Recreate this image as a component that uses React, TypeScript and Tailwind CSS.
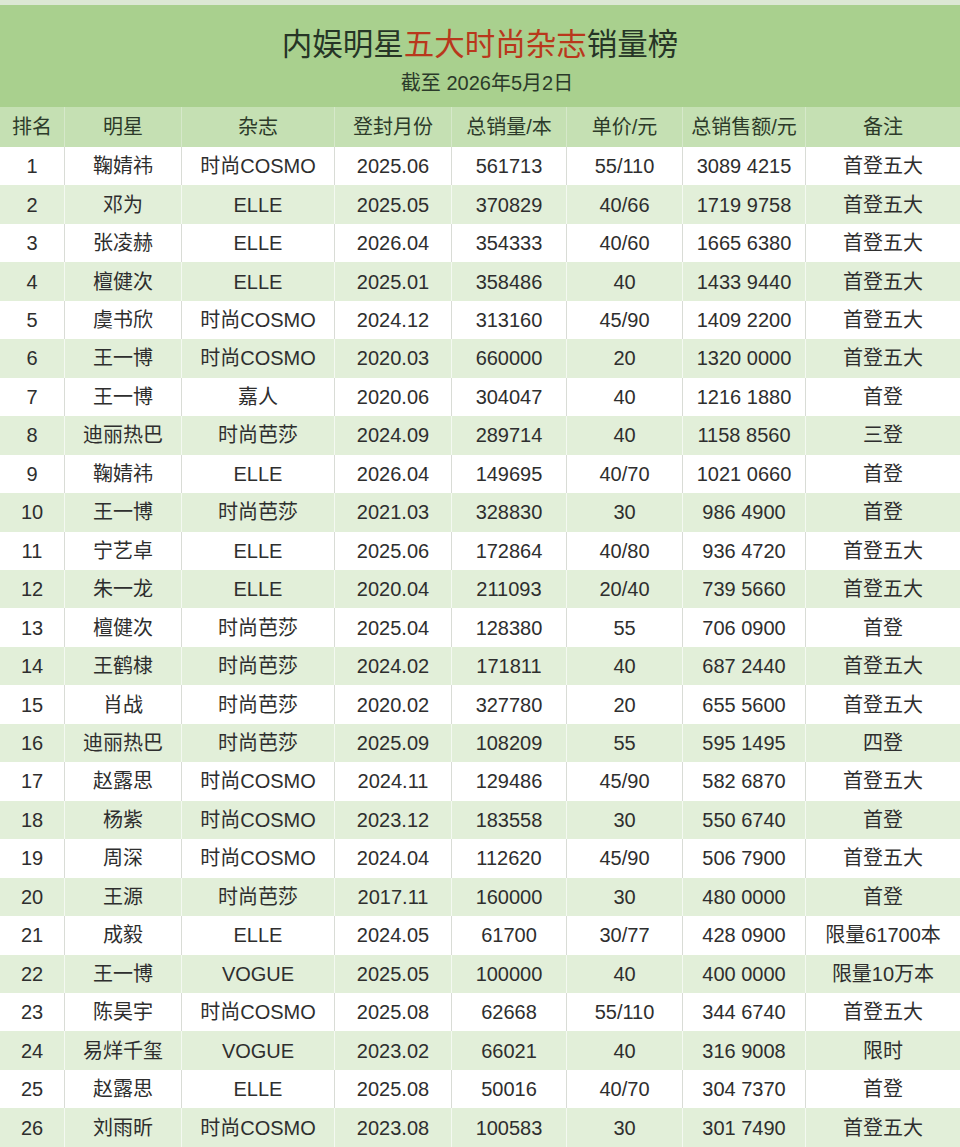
const rows: string[][] = [
  ["1", "鞠婧祎", "时尚COSMO", "2025.06", "561713", "55/110", "3089 4215", "首登五大"],
  ["2", "邓为", "ELLE", "2025.05", "370829", "40/66", "1719 9758", "首登五大"],
  ["3", "张凌赫", "ELLE", "2026.04", "354333", "40/60", "1665 6380", "首登五大"],
  ["4", "檀健次", "ELLE", "2025.01", "358486", "40", "1433 9440", "首登五大"],
  ["5", "虞书欣", "时尚COSMO", "2024.12", "313160", "45/90", "1409 2200", "首登五大"],
  ["6", "王一博", "时尚COSMO", "2020.03", "660000", "20", "1320 0000", "首登五大"],
  ["7", "王一博", "嘉人", "2020.06", "304047", "40", "1216 1880", "首登"],
  ["8", "迪丽热巴", "时尚芭莎", "2024.09", "289714", "40", "1158 8560", "三登"],
  ["9", "鞠婧祎", "ELLE", "2026.04", "149695", "40/70", "1021 0660", "首登"],
  ["10", "王一博", "时尚芭莎", "2021.03", "328830", "30", "986 4900", "首登"],
  ["11", "宁艺卓", "ELLE", "2025.06", "172864", "40/80", "936 4720", "首登五大"],
  ["12", "朱一龙", "ELLE", "2020.04", "211093", "20/40", "739 5660", "首登五大"],
  ["13", "檀健次", "时尚芭莎", "2025.04", "128380", "55", "706 0900", "首登"],
  ["14", "王鹤棣", "时尚芭莎", "2024.02", "171811", "40", "687 2440", "首登五大"],
  ["15", "肖战", "时尚芭莎", "2020.02", "327780", "20", "655 5600", "首登五大"],
  ["16", "迪丽热巴", "时尚芭莎", "2025.09", "108209", "55", "595 1495", "四登"],
  ["17", "赵露思", "时尚COSMO", "2024.11", "129486", "45/90", "582 6870", "首登五大"],
  ["18", "杨紫", "时尚COSMO", "2023.12", "183558", "30", "550 6740", "首登"],
  ["19", "周深", "时尚COSMO", "2024.04", "112620", "45/90", "506 7900", "首登五大"],
  ["20", "王源", "时尚芭莎", "2017.11", "160000", "30", "480 0000", "首登"],
  ["21", "成毅", "ELLE", "2024.05", "61700", "30/77", "428 0900", "限量61700本"],
  ["22", "王一博", "VOGUE", "2025.05", "100000", "40", "400 0000", "限量10万本"],
  ["23", "陈昊宇", "时尚COSMO", "2025.08", "62668", "55/110", "344 6740", "首登五大"],
  ["24", "易烊千玺", "VOGUE", "2023.02", "66021", "40", "316 9008", "限时"],
  ["25", "赵露思", "ELLE", "2025.08", "50016", "40/70", "304 7370", "首登"],
  ["26", "刘雨昕", "时尚COSMO", "2023.08", "100583", "30", "301 7490", "首登五大"],
]

const headers = ["排名", "明星", "杂志", "登封月份", "总销量/本", "单价/元", "总销售额/元", "备注"]

const cols = "grid grid-cols-[65px_117px_153px_117px_115px_116px_123px_1fr]"

export default function App() {
  return (
    <div
      className="w-[960px] h-[1147px] overflow-hidden bg-[#e8f0e2] text-[#2e2e2e]"
      style={{ fontFamily: '"Liberation Sans", "Noto Sans CJK SC", sans-serif' }}
    >
      <div className="h-[5px] bg-[#dce8d4]" />
      <div className="h-[102px] bg-[#a9d08e] flex flex-col items-center">
        <h1 className="mt-[19px] text-[30.5px] leading-[40px] text-[#263526]">
          内娱明星<span className="text-[#b9381c]">五大时尚杂志</span>销量榜
        </h1>
        <p className="mt-[7px] text-[20px] leading-[24px] text-[#2b3a2a] pl-[14px]">截至 2026年5月2日</p>
      </div>

      <div className={`${cols} h-[40px] bg-[#c5e0b3]`}>
        {headers.map((h, i) => (
          <div
            key={h}
            className={`flex items-center justify-center text-[20px] text-[#2d3b2a] ${i < 7 ? "border-r border-[#d6e8ca]" : ""}`}
          >
            {h}
          </div>
        ))}
      </div>

      {rows.map((r, ri) => {
        const green = ri % 2 === 1
        return (
          <div key={ri} className={`${cols} h-[38.46px] ${green ? "bg-[#e2efd9]" : "bg-white"}`}>
            {r.map((c, ci) => (
              <div
                key={ci}
                className={`flex items-center justify-center text-[20px] whitespace-nowrap ${
                  ci < 7 ? (green ? "border-r border-[#f4f9f1]" : "border-r border-[#d9dcd6]") : ""
                }`}
              >
                {c}
              </div>
            ))}
          </div>
        )
      })}
    </div>
  )
}
